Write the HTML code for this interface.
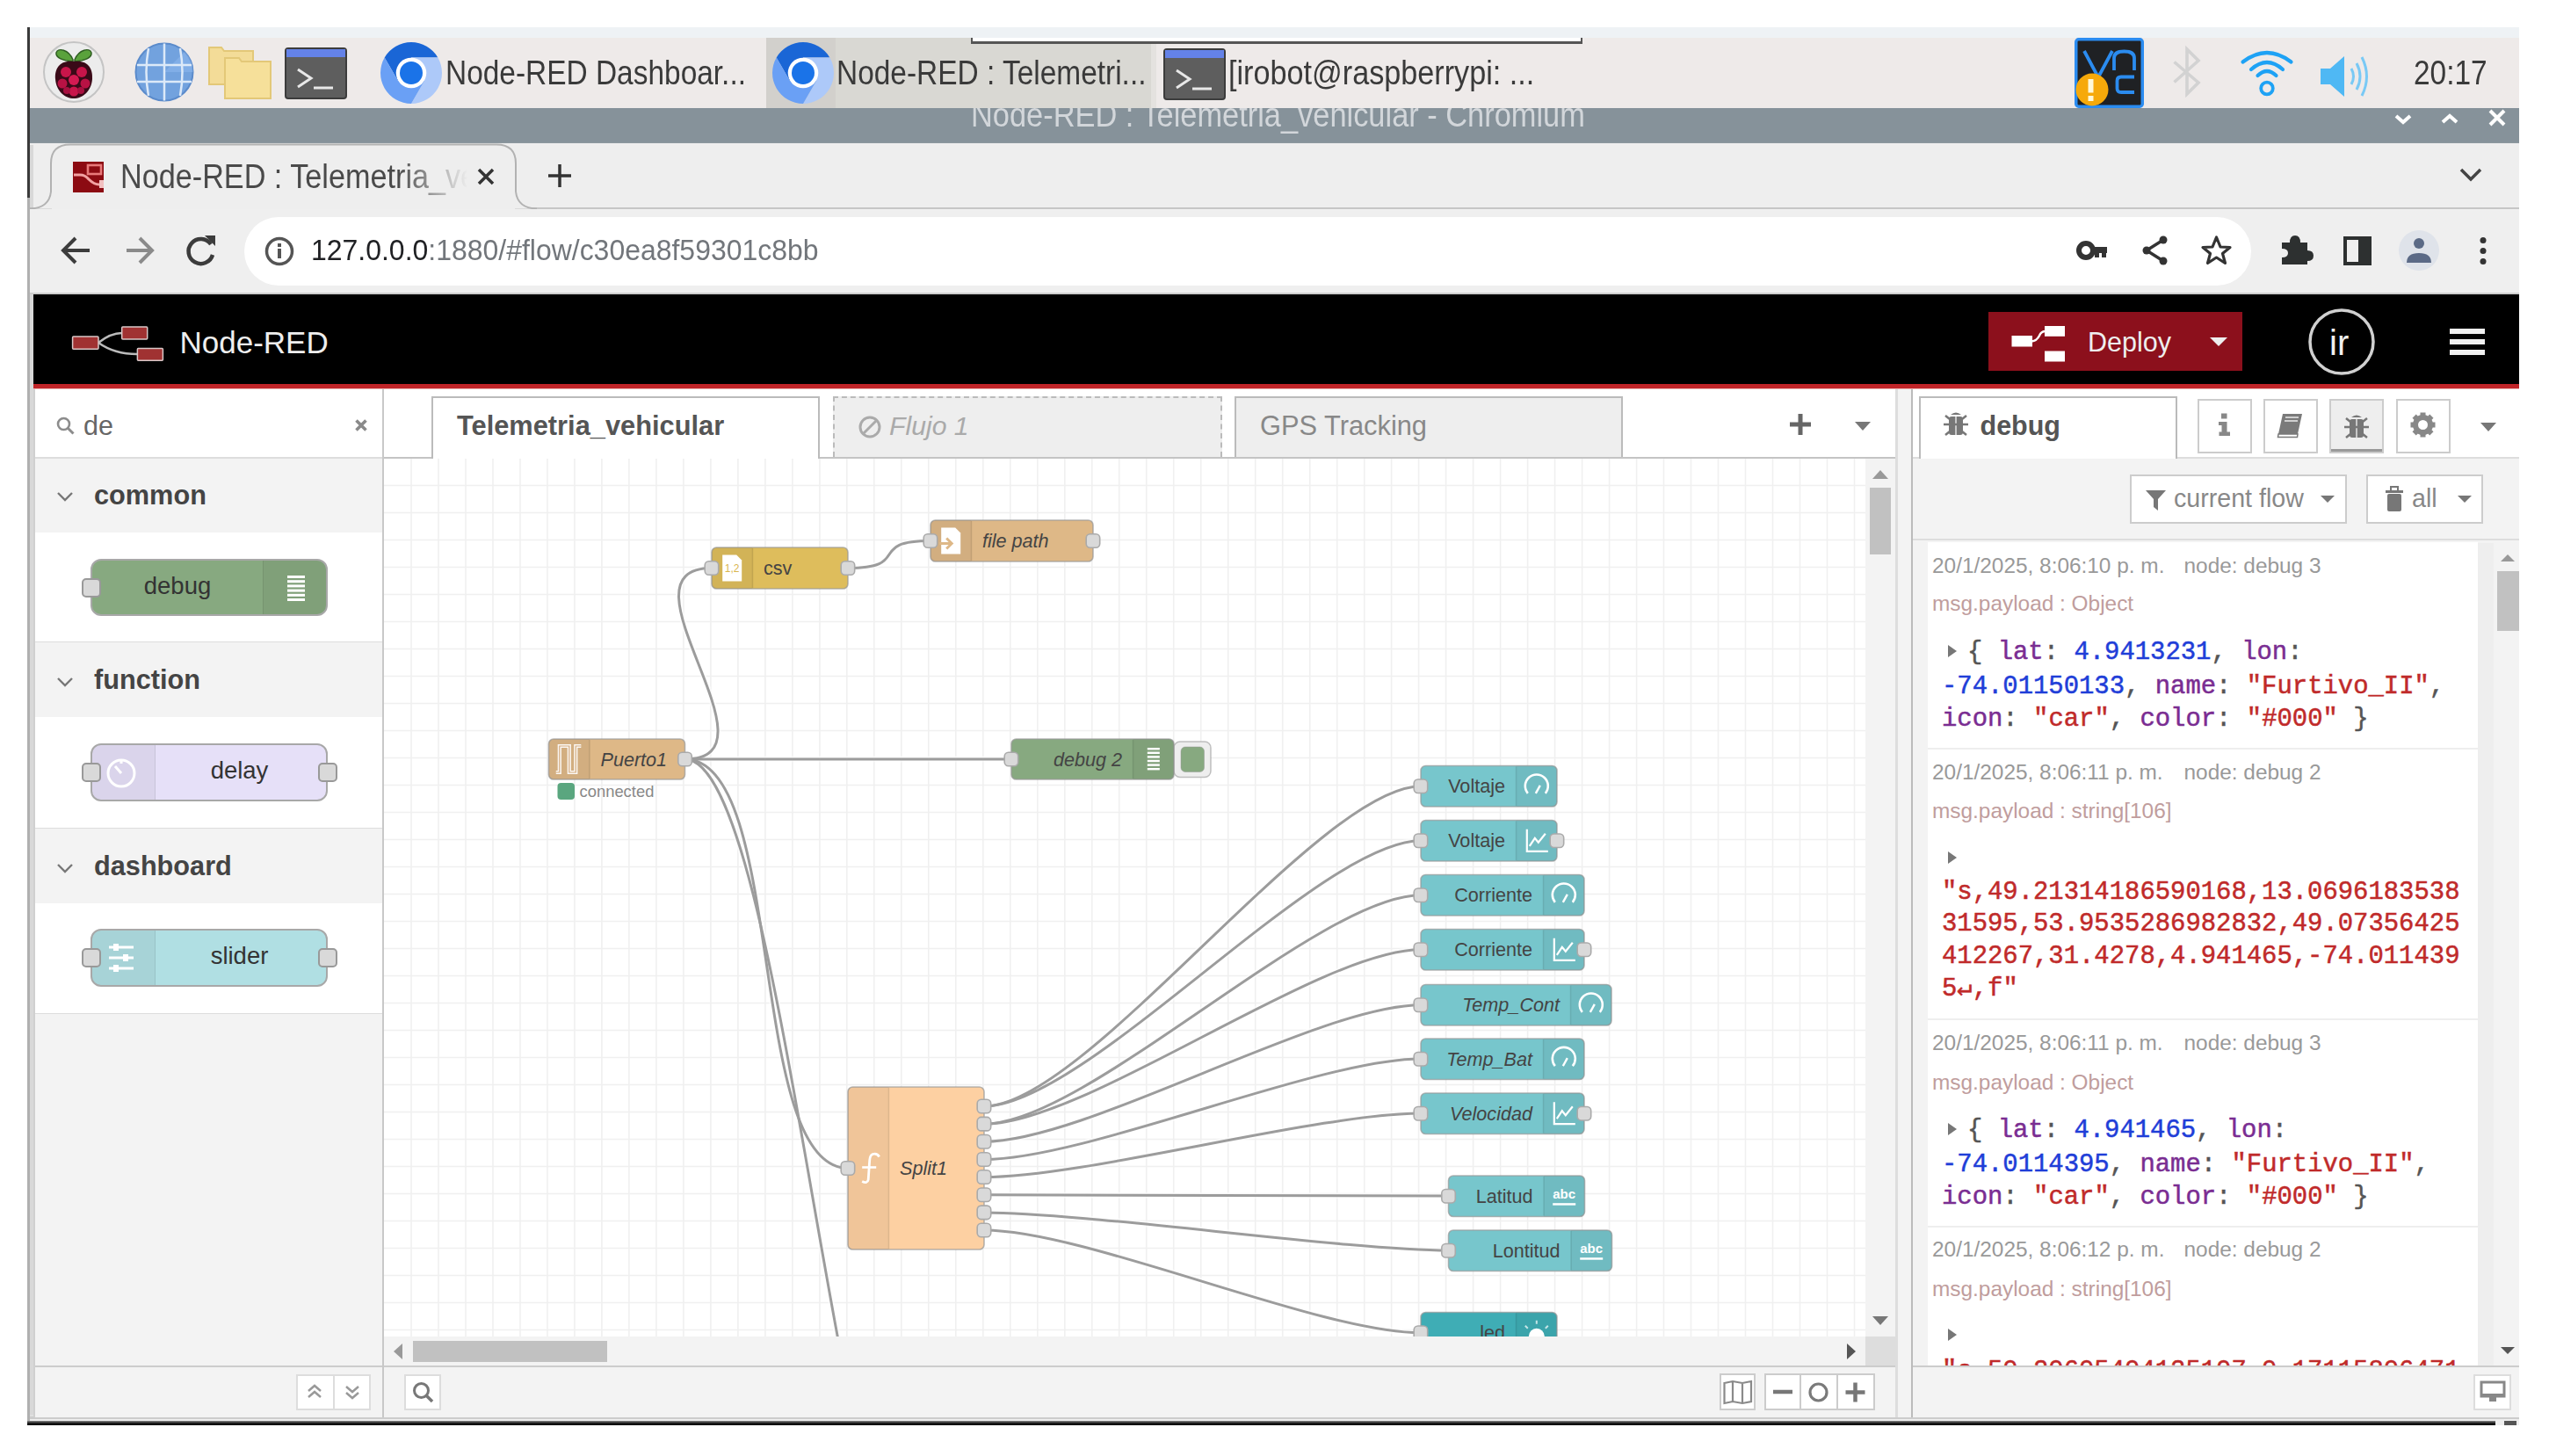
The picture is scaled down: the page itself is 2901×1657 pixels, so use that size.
<!DOCTYPE html>
<html><head><meta charset="utf-8">
<style>
html,body{margin:0;padding:0;}
body{width:2901px;height:1657px;overflow:hidden;background:#fff;position:relative;font-family:"Liberation Sans",sans-serif;}
.a{position:absolute;box-sizing:border-box;}
.t{position:absolute;white-space:nowrap;line-height:1;}
svg{position:absolute;overflow:visible;}
</style></head><body>
<div class="a" style="left:31px;top:31px;width:3px;height:194px;background:#3a3a3a;"></div>
<div class="a" style="left:31px;top:225px;width:3px;height:1397px;background:#b0b0b0;"></div>
<div class="a" style="left:34px;top:31px;width:2833px;height:12px;background:#eef2f5;"></div>
<div class="a" style="left:34px;top:43px;width:2833px;height:80px;background:#eeeae9;"></div>
<div class="a" style="left:34px;top:123px;width:2833px;height:40px;background:#86929a;"></div>
<div class="a" style="left:34px;top:162px;width:2833px;height:1px;background:#8d989f;"></div>
<div class="a" style="left:34px;top:163px;width:2833px;height:1459px;background:#eeeeee;"></div>
<div class="a" style="left:34px;top:165px;width:4px;height:1450px;background:#d8d8d8;"></div>
<div class="a" style="left:34px;top:1610px;width:2833px;height:2px;background:#e0e0e0;"></div>
<div class="a" style="left:34px;top:1612px;width:2833px;height:3px;background:#cccccc;"></div>
<div class="a" style="left:34px;top:1615px;width:2833px;height:2px;background:#eeeeee;"></div>
<div class="a" style="left:31px;top:1617px;width:2809px;height:5px;background:linear-gradient(#888,#111 60%,#000)"></div>
<div class="a" style="left:2850px;top:1617px;width:14px;height:5px;background:#555;"></div>
<div class="a" style="left:872px;top:43px;width:438px;height:80px;background:#d9d8d3;"></div>
<div class="a" style="left:872px;top:43px;width:79px;height:80px;background:#d2d0cc;"></div>
<div class="a" style="left:1310px;top:43px;width:6px;height:80px;background:#e4e2df;"></div>
<div class="a" style="left:1105px;top:43px;width:696px;height:7px;background:#fff;border-left:2px solid #555;border-right:2px solid #555;border-bottom:3px solid #555"></div>
<svg style="left:44px;top:42px" width="80" height="80" viewBox="0 0 80 80">
<circle cx="40" cy="40" r="34" fill="#ececec" stroke="#c4c4c4" stroke-width="2"/>
<path d="M39 26 C 34 14, 22 12, 20 18 C 19 24, 28 27, 39 28 Z" fill="#5aa23c" stroke="#2f5e22" stroke-width="1.5"/>
<path d="M41 26 C 46 14, 58 12, 60 18 C 61 24, 52 27, 41 28 Z" fill="#5aa23c" stroke="#2f5e22" stroke-width="1.5"/>
<path d="M40 28 C 56 26, 62 36, 61 48 C 60 62, 50 70, 40 70 C 30 70, 20 62, 19 48 C 18 36, 24 26, 40 28 Z" fill="#3a0a18"/>
<circle cx="31" cy="40" r="6" fill="#c8154a"/><circle cx="49" cy="40" r="6" fill="#c8154a"/>
<circle cx="40" cy="49" r="6" fill="#d41a52"/><circle cx="27" cy="53" r="5.5" fill="#b81244"/><circle cx="53" cy="53" r="5.5" fill="#b81244"/>
<circle cx="40" cy="62" r="5.5" fill="#c8154a"/><circle cx="32" cy="61" r="4" fill="#a81040"/><circle cx="48" cy="61" r="4" fill="#a81040"/>
</svg>
<svg style="left:152px;top:47px" width="70" height="70" viewBox="0 0 70 70">
<circle cx="35" cy="35" r="32.5" fill="#72a2de" stroke="#5b8bcb" stroke-width="2"/>
<path d="M35 35 L58 12 A32.5 32.5 0 0 1 67.5 35 Z" fill="#8cb6ec" opacity="0.6"/>
<line x1="35" y1="2.5" x2="35" y2="67.5" stroke="#dce9f8" stroke-width="2.5"/>
<line x1="4" y1="27" x2="66" y2="27" stroke="#dce9f8" stroke-width="2.5"/>
<line x1="4" y1="46" x2="66" y2="46" stroke="#dce9f8" stroke-width="2.5"/>
<path d="M17 8 Q12 35 17 62 M53 8 Q58 35 53 62" fill="none" stroke="#dce9f8" stroke-width="2.5"/>
</svg>
<svg style="left:236px;top:52px" width="76" height="64" viewBox="0 0 76 64">
<path d="M2 2 H16 L19 6 H52 V44 H2 Z" fill="#f3dc98" stroke="#e3c878" stroke-width="2"/>
<path d="M20 14 H36 L39 18 H72 V60 H20 Z" fill="#f6e09a" stroke="#e3c878" stroke-width="2"/>
</svg>
<svg style="left:324px;top:54px" width="71" height="59" viewBox="0 0 71 59">
<rect x="1" y="1" width="69" height="57" rx="3" fill="#5e5e5e" stroke="#3c3c3c" stroke-width="2"/>
<rect x="2" y="2" width="67" height="9" fill="#6482e8"/>
<polyline points="15,25 30,35 15,45" fill="none" stroke="#e8e8e8" stroke-width="3"/>
<line x1="33" y1="46" x2="55" y2="46" stroke="#e8e8e8" stroke-width="3"/>
</svg>
<svg style="left:1324px;top:55px" width="71" height="59" viewBox="0 0 71 59">
<rect x="1" y="1" width="69" height="57" rx="3" fill="#5e5e5e" stroke="#3c3c3c" stroke-width="2"/>
<rect x="2" y="2" width="67" height="9" fill="#6482e8"/>
<polyline points="15,25 30,35 15,45" fill="none" stroke="#e8e8e8" stroke-width="3"/>
<line x1="33" y1="46" x2="55" y2="46" stroke="#e8e8e8" stroke-width="3"/>
</svg>
<svg style="left:432.7px;top:47.8px" width="70" height="70" viewBox="-35 -35 70 70">
<path d="M-30.31 -17.5 A35 35 0 0 1 30.31 -17.5 L0 -17.5 L-15.16 8.75 Z" fill="#1a66d6"/>
<path d="M30.31 -17.5 A35 35 0 0 1 0 35 L15.16 8.75 L0 -17.5 Z" fill="#adc9f9"/>
<path d="M0 35 A35 35 0 0 1 -30.31 -17.5 L-15.16 8.75 L15.16 8.75 Z" fill="#6aa0f5"/>
<circle cx="0" cy="0" r="17.3" fill="#ffffff"/>
<circle cx="0" cy="0" r="13" fill="#1a73e8"/>
</svg>
<svg style="left:878.5px;top:47.8px" width="70" height="70" viewBox="-35 -35 70 70">
<path d="M-30.31 -17.5 A35 35 0 0 1 30.31 -17.5 L0 -17.5 L-15.16 8.75 Z" fill="#1a66d6"/>
<path d="M30.31 -17.5 A35 35 0 0 1 0 35 L15.16 8.75 L0 -17.5 Z" fill="#adc9f9"/>
<path d="M0 35 A35 35 0 0 1 -30.31 -17.5 L-15.16 8.75 L15.16 8.75 Z" fill="#6aa0f5"/>
<circle cx="0" cy="0" r="17.3" fill="#ffffff"/>
<circle cx="0" cy="0" r="13" fill="#1a73e8"/>
</svg>
<div class="t" style="left:507.0px;top:63.8px;font-size:38px;color:#3a3a3a;font-weight:normal;font-style:normal;font-family:'Liberation Sans',sans-serif;transform:scaleX(0.88);transform-origin:0 0;">Node-RED Dashboar...</div>
<div class="t" style="left:952.0px;top:63.8px;font-size:38px;color:#3a3a3a;font-weight:normal;font-style:normal;font-family:'Liberation Sans',sans-serif;transform:scaleX(0.88);transform-origin:0 0;">Node-RED : Telemetri...</div>
<div class="t" style="left:1398.0px;top:63.8px;font-size:38px;color:#3a3a3a;font-weight:normal;font-style:normal;font-family:'Liberation Sans',sans-serif;transform:scaleX(0.9);transform-origin:0 0;">[irobot@raspberrypi: ...</div>
<div class="t" style="left:2747.0px;top:63.8px;font-size:38px;color:#3a3a3a;font-weight:normal;font-style:normal;font-family:'Liberation Sans',sans-serif;transform:scaleX(0.88);transform-origin:0 0;">20:17</div>
<svg style="left:2361px;top:43px" width="80" height="80" viewBox="2361 43 80 80">
<rect x="2362.75" y="44.75" width="75.5" height="76.5" rx="3" fill="#1f2124" stroke="#2b8cf0" stroke-width="3.5"/>
<path d="M2372 58 L2388 88 L2404 58" fill="none" stroke="#2b8cf0" stroke-width="3.8"/>
<path d="M2406 80 V66 Q2406 58.5 2417.5 58.5 Q2429 58.5 2429 66 V80" fill="none" stroke="#2b8cf0" stroke-width="3.8"/>
<path d="M2429 87.5 H2414 Q2409.5 87.5 2409.5 92 V100.5 Q2409.5 105 2414 105 H2429" fill="none" stroke="#2b8cf0" stroke-width="3.8"/>
<circle cx="2381" cy="102" r="18.5" fill="#f6a90a"/>
<rect x="2376.5" y="90" width="6" height="15.5" fill="#fff8d8"/><rect x="2376.5" y="109" width="6" height="6" fill="#fff8d8"/>
</svg>
<svg style="left:2470px;top:52px" width="38" height="62" viewBox="0 0 38 62">
<path d="M4.5 18.5 L32 42 L19 55 V4 L32 17 L4.5 41.5" fill="none" stroke="#d2d2d2" stroke-width="3.6"/>
</svg>
<svg style="left:2549px;top:56px" width="62" height="58" viewBox="0 0 62 58">
<path d="M3.5 14.5 Q31 -6.5 58.5 14.5" fill="none" stroke="#1ea2f5" stroke-width="4.2" stroke-linecap="round"/>
<path d="M13 23 Q31 7 49 23" fill="none" stroke="#1ea2f5" stroke-width="4.2" stroke-linecap="round"/>
<path d="M20.5 30 Q31 20 41.5 30" fill="none" stroke="#1ea2f5" stroke-width="4.2" stroke-linecap="round"/>
<circle cx="31" cy="44.5" r="6.8" fill="none" stroke="#1ea2f5" stroke-width="3.8"/>
</svg>
<svg style="left:2638px;top:58px" width="64" height="58" viewBox="0 0 64 58">
<path d="M3 20 H14 L30 6 V52 L14 38 H3 Z" fill="#4fb8f4"/>
<path d="M38 20 Q43 29 38 38" fill="none" stroke="#79c9f5" stroke-width="3"/>
<path d="M44 14 Q52 29 44 44" fill="none" stroke="#79c9f5" stroke-width="3"/>
<path d="M50 7 Q61 29 50 51" fill="none" stroke="#79c9f5" stroke-width="3"/>
</svg>
<div class="a" style="left:34px;top:123px;width:2833px;height:40px;overflow:hidden"><div class="t" style="left:1071.0px;top:-10.6px;font-size:38px;color:#d2d6da;font-weight:normal;font-style:normal;font-family:'Liberation Sans',sans-serif;transform:scaleX(0.905);transform-origin:0 0;">Node-RED : Telemetria_vehicular - Chromium</div></div>
<svg style="left:2722px;top:124px" width="140" height="24" viewBox="0 0 140 24">
<polyline points="5,8 13,15 21,8" fill="none" stroke="#fff" stroke-width="4"/>
<polyline points="58,15 66,8 74,15" fill="none" stroke="#fff" stroke-width="4"/>
<path d="M112 2 L128 18 M128 2 L112 18" stroke="#fff" stroke-width="4"/>
</svg>
<div class="a" style="left:34px;top:236px;width:2833px;height:2px;background:#c6c6c6;"></div>
<svg style="left:34px;top:162px" width="600" height="78" viewBox="34 162 600 78">
<path d="M34 237.5 Q56 237 58 218 V186 Q58 164.5 80 164.5 H565 Q587 164.5 587 186 V218 Q589 237 611 237.5" fill="#eeeeee" stroke="#b2b2b2" stroke-width="2"/>
<rect x="59" y="230" width="527" height="10" fill="#eeeeee"/>
</svg>
<svg style="left:83px;top:184px" width="35" height="35" viewBox="0 0 35 35">
<rect x="0" y="0" width="35" height="35" fill="#8c0b12"/>
<rect x="17" y="4" width="15" height="10" fill="none" stroke="#e87a7a" stroke-width="2.6"/>
<path d="M1 15 H8 Q14 15 18 20 Q24 26 30 26" fill="none" stroke="#f2a2a2" stroke-width="3"/>
<rect x="30" y="21" width="5" height="9" fill="#f2c0c0"/>
</svg>
<div class="a" style="left:137px;top:170px;width:395px;height:60px;overflow:hidden;-webkit-mask-image:linear-gradient(to right,#000 80%,transparent 100%);mask-image:linear-gradient(to right,#000 80%,transparent 100%)"><div class="t" style="left:0.0px;top:11.8px;font-size:38px;color:#4a4a4a;font-weight:normal;font-style:normal;font-family:'Liberation Sans',sans-serif;transform:scaleX(0.9);transform-origin:0 0;">Node-RED : Telemetria_vehicular</div></div>
<svg style="left:540px;top:188px" width="26" height="26" viewBox="0 0 26 26">
<path d="M5 5 L21 21 M21 5 L5 21" stroke="#333" stroke-width="3.5"/></svg>
<svg style="left:621px;top:184px" width="32" height="32" viewBox="0 0 32 32">
<path d="M16 3 V29 M3 16 H29" stroke="#333" stroke-width="3.5"/></svg>
<svg style="left:2798px;top:190px" width="28" height="18" viewBox="0 0 28 18">
<polyline points="3,3 14,14 25,3" fill="none" stroke="#444" stroke-width="3.5"/></svg>
<div class="a" style="left:34px;top:238px;width:2833px;height:96px;background:#efefef;"></div>
<div class="a" style="left:34px;top:333px;width:2833px;height:2px;background:#cfcfcf;"></div>
<div class="a" style="left:278px;top:247px;width:2284px;height:78px;background:#fff;border-radius:39px"></div>
<svg style="left:64px;top:264px" width="190" height="42" viewBox="0 0 190 42">
<path d="M38 21 H9 M22 7 L8 21 L22 35" fill="none" stroke="#3c3c3c" stroke-width="4"/>
<path d="M80 21 H108 M95 7 L109 21 L95 35" fill="none" stroke="#8a8a8a" stroke-width="4"/>
<path d="M176 14 A14 14 0 1 0 178 26" fill="none" stroke="#3c3c3c" stroke-width="4.5"/>
<path d="M169 4 L181 4 L181 16 Z" fill="#3c3c3c"/>
</svg>
<svg style="left:300px;top:268px" width="36" height="36" viewBox="0 0 36 36">
<circle cx="18" cy="18" r="14.5" fill="none" stroke="#555" stroke-width="3.5"/>
<rect x="16" y="15" width="4" height="11" fill="#555"/><rect x="16" y="9" width="4" height="4" fill="#555"/>
</svg>
<div class="t" style="left:354.0px;top:267.2px;font-size:34px;color:#72767b;font-weight:normal;font-style:normal;font-family:'Liberation Sans',sans-serif;transform:scaleX(0.94);transform-origin:0 0;"><span style="color:#202124">127.0.0.0</span><span style="color:#72767b">:1880/#flow/c30ea8f59301c8bb</span></div>
<svg style="left:2355px;top:262px" width="500" height="48" viewBox="2355 262 500 48">
<circle cx="2374" cy="285" r="8" fill="none" stroke="#333" stroke-width="6"/>
<rect x="2380" y="281" width="18" height="7" fill="#333"/><rect x="2384" y="286" width="5" height="7" fill="#333"/><rect x="2392" y="286" width="5" height="7" fill="#333"/>
<path d="M2462 273 L2443 285 L2462 297" fill="none" stroke="#333" stroke-width="3.5"/>
<circle cx="2462" cy="273" r="4.5" fill="#333"/><circle cx="2443" cy="285" r="4.5" fill="#333"/><circle cx="2462" cy="297" r="4.5" fill="#333"/>
<path d="M2522.5 270 L2527 281 L2538 281.5 L2529.5 288.5 L2532.5 299.5 L2522.5 293 L2512.5 299.5 L2515.5 288.5 L2507 281.5 L2518 281 Z" fill="none" stroke="#333" stroke-width="3.2" stroke-linejoin="round"/>
<path d="M2597 276 H2606 Q2606 268 2612 268 Q2618 268 2618 276 H2626 V285 Q2633 285 2633 291 Q2633 297 2626 297 V301 H2597 V293 Q2604 293 2604 288 Q2604 283 2597 283 Z" fill="#2d3030"/>
<rect x="2669" y="271" width="28" height="29" fill="none" stroke="#2d3030" stroke-width="4"/><rect x="2684" y="271" width="13" height="29" fill="#2d3030"/>
<circle cx="2753" cy="285" r="23" fill="#dfe3ea"/>
<circle cx="2753" cy="277" r="6" fill="#5b6a86"/><path d="M2739 299 Q2739 288 2753 288 Q2767 288 2767 299 Z" fill="#5b6a86"/>
<circle cx="2826" cy="273.5" r="3.5" fill="#333"/><circle cx="2826" cy="285.5" r="3.5" fill="#333"/><circle cx="2826" cy="297.5" r="3.5" fill="#333"/>
</svg>
<div class="a" style="left:38px;top:335px;width:2829px;height:102px;background:#000;"></div>
<div class="a" style="left:38px;top:437px;width:2829px;height:5px;background:#c02428;"></div>
<div class="a" style="left:38px;top:442px;width:2829px;height:1px;background:#e8b4b4;"></div>
<svg style="left:78px;top:366px" width="112" height="50" viewBox="78 366 112 50">
<path d="M112 390 Q126 379 138.7 379 M112 390 Q130 403 156.4 403" fill="none" stroke="#bbb" stroke-width="2.5"/>
<rect x="82.6" y="383" width="29.4" height="14.3" rx="1" fill="#a03232" stroke="#d8c8c8" stroke-width="1.5"/>
<rect x="138.7" y="372" width="29" height="14" rx="1" fill="#a03232" stroke="#d8c8c8" stroke-width="1.5"/>
<rect x="156.4" y="396.5" width="29" height="13.8" rx="1" fill="#a03232" stroke="#d8c8c8" stroke-width="1.5"/>
</svg>
<div class="t" style="left:204.5px;top:371.9px;font-size:35px;color:#eeeeee;font-weight:normal;font-style:normal;font-family:'Liberation Sans',sans-serif;">Node-RED</div>
<div class="a" style="left:2263px;top:355px;width:289px;height:67px;background:#8c101c;"></div>
<svg style="left:2285px;top:368px" width="70" height="46" viewBox="2285 368 70 46">
<rect x="2289.5" y="382" width="23.5" height="12.5" fill="#fff"/>
<path d="M2312 388.5 Q2318 388 2321 382 Q2323 377 2328 377" fill="none" stroke="#fff" stroke-width="2.5"/>
<rect x="2327" y="371" width="23" height="11.8" fill="#fff"/>
<rect x="2327" y="399.5" width="23" height="12" fill="#fff"/>
</svg>
<div class="t" style="left:2376.0px;top:374.2px;font-size:30.5px;color:#eeeeee;font-weight:normal;font-style:normal;font-family:'Liberation Sans',sans-serif;">Deploy</div>
<svg style="left:2514px;top:383px" width="22" height="12" viewBox="0 0 22 12"><path d="M1 1 H21 L11 11 Z" fill="#eee"/></svg>
<svg style="left:2626px;top:350px" width="78" height="78" viewBox="0 0 78 78">
<circle cx="39" cy="39" r="36" fill="none" stroke="#d0d0d0" stroke-width="3.5"/></svg>
<div class="t" style="left:2651.0px;top:370.1px;font-size:40px;color:#f0f0f0;font-weight:normal;font-style:normal;font-family:'Liberation Sans',sans-serif;">ir</div>
<div class="a" style="left:2788px;top:374px;width:40px;height:6px;background:#f0f0f0;"></div>
<div class="a" style="left:2788px;top:386px;width:40px;height:6px;background:#f0f0f0;"></div>
<div class="a" style="left:2788px;top:398px;width:40px;height:6px;background:#f0f0f0;"></div>
<div class="a" style="left:38px;top:443px;width:399px;height:1170px;background:#f3f3f3;"></div>
<div class="a" style="left:38px;top:443px;width:2px;height:1170px;background:#d0d0d0;"></div>
<div class="a" style="left:435px;top:443px;width:2px;height:1170px;background:#c8c8c8;"></div>
<div class="a" style="left:40px;top:443px;width:395px;height:77px;background:#ffffff;"></div>
<div class="a" style="left:40px;top:520px;width:395px;height:2px;background:#dddddd;"></div>
<svg style="left:63px;top:473px" width="24" height="24" viewBox="0 0 24 24">
<circle cx="9.5" cy="9.5" r="6.5" fill="none" stroke="#8c8c8c" stroke-width="2.6"/><path d="M14 14 L20.5 20.5" stroke="#8c8c8c" stroke-width="3"/></svg>
<div class="t" style="left:95.0px;top:469.2px;font-size:30.5px;color:#666;font-weight:normal;font-style:normal;font-family:'Liberation Sans',sans-serif;">de</div>
<svg style="left:402px;top:475px" width="18" height="18" viewBox="0 0 18 18">
<path d="M3.5 3.5 L14.5 14.5 M14.5 3.5 L3.5 14.5" stroke="#8a8a8a" stroke-width="3.6"/></svg>
<div class="a" style="left:40px;top:522px;width:395px;height:84px;background:#f3f3f3;"></div>
<svg style="left:64px;top:559px" width="20" height="12" viewBox="0 0 20 12"><polyline points="2,2 10,10 18,2" fill="none" stroke="#777" stroke-width="2.4"/></svg>
<div class="t" style="left:107.0px;top:549.0px;font-size:30.7px;color:#444;font-weight:bold;font-style:normal;font-family:'Liberation Sans',sans-serif;">common</div>
<div class="a" style="left:40px;top:606px;width:395px;height:124px;background:#ffffff;"></div>
<div class="a" style="left:40px;top:730px;width:395px;height:1px;background:#dddddd;"></div>
<div class="a" style="left:103px;top:636px;width:270px;height:65px;background:#87a980;border:2px solid #a8a8a8;border-radius:12px;overflow:hidden">
<div class="a" style="right:0;top:0;width:72px;height:100%;background:rgba(0,0,0,0.05);border-left:1px solid rgba(0,0,0,0.08)"></div>
</div>
<svg style="left:320px;top:652px" width="34" height="34" viewBox="0 0 34 34"><rect x="7" y="3.0" width="20" height="3" fill="#fff"/><rect x="7" y="8.2" width="20" height="3" fill="#fff"/><rect x="7" y="13.4" width="20" height="3" fill="#fff"/><rect x="7" y="18.6" width="20" height="3" fill="#fff"/><rect x="7" y="23.8" width="20" height="3" fill="#fff"/><rect x="7" y="29.0" width="20" height="3" fill="#fff"/></svg>
<div class="t" style="left:202px;top:652.8px;font-size:27.5px;color:#333;transform:translateX(-50%)">debug</div>
<div class="a" style="left:93px;top:657.5px;width:22px;height:22px;background:#d9d9d9;border:2px solid #999;border-radius:5px"></div>
<div class="a" style="left:40px;top:731px;width:395px;height:85px;background:#f3f3f3;"></div>
<svg style="left:64px;top:770px" width="20" height="12" viewBox="0 0 20 12"><polyline points="2,2 10,10 18,2" fill="none" stroke="#777" stroke-width="2.4"/></svg>
<div class="t" style="left:107.0px;top:759.0px;font-size:30.7px;color:#444;font-weight:bold;font-style:normal;font-family:'Liberation Sans',sans-serif;">function</div>
<div class="a" style="left:40px;top:816px;width:395px;height:126px;background:#ffffff;"></div>
<div class="a" style="left:40px;top:942px;width:395px;height:1px;background:#dddddd;"></div>
<div class="a" style="left:103px;top:846px;width:270px;height:66px;background:#e6e0f8;border:2px solid #a8a8a8;border-radius:12px;overflow:hidden">
<div class="a" style="left:0;top:0;width:72px;height:100%;background:rgba(0,0,0,0.05);border-right:1px solid rgba(0,0,0,0.08)"></div>
</div>
<svg style="left:118px;top:859px" width="40" height="40" viewBox="0 0 40 40"><circle cx="20" cy="21" r="15" fill="none" stroke="#fff" stroke-width="3"/><path d="M20 6 V10 M20 21 L13 13" stroke="#fff" stroke-width="3"/></svg>
<div class="t" style="left:272.5px;top:863.2px;font-size:27.5px;color:#333;transform:translateX(-50%)">delay</div>
<div class="a" style="left:93px;top:868.0px;width:22px;height:22px;background:#d9d9d9;border:2px solid #999;border-radius:5px"></div>
<div class="a" style="left:362px;top:868.0px;width:22px;height:22px;background:#d9d9d9;border:2px solid #999;border-radius:5px"></div>
<div class="a" style="left:40px;top:943px;width:395px;height:85px;background:#f3f3f3;"></div>
<svg style="left:64px;top:982px" width="20" height="12" viewBox="0 0 20 12"><polyline points="2,2 10,10 18,2" fill="none" stroke="#777" stroke-width="2.4"/></svg>
<div class="t" style="left:107.0px;top:971.0px;font-size:30.7px;color:#444;font-weight:bold;font-style:normal;font-family:'Liberation Sans',sans-serif;">dashboard</div>
<div class="a" style="left:40px;top:1028px;width:395px;height:125px;background:#ffffff;"></div>
<div class="a" style="left:40px;top:1153px;width:395px;height:1px;background:#dddddd;"></div>
<div class="a" style="left:103px;top:1057px;width:270px;height:66px;background:#b0dfe3;border:2px solid #a8a8a8;border-radius:12px;overflow:hidden">
<div class="a" style="left:0;top:0;width:72px;height:100%;background:rgba(0,0,0,0.05);border-right:1px solid rgba(0,0,0,0.08)"></div>
</div>
<svg style="left:120px;top:1070px" width="36" height="40" viewBox="0 0 36 40"><path d="M4 8 H32 M4 20 H32 M4 32 H32" stroke="#fff" stroke-width="3"/><rect x="9" y="4" width="6" height="8" fill="#fff"/><rect x="20" y="16" width="6" height="8" fill="#fff"/><rect x="9" y="28" width="6" height="8" fill="#fff"/></svg>
<div class="t" style="left:272.5px;top:1074.2px;font-size:27.5px;color:#333;transform:translateX(-50%)">slider</div>
<div class="a" style="left:93px;top:1079.0px;width:22px;height:22px;background:#d9d9d9;border:2px solid #999;border-radius:5px"></div>
<div class="a" style="left:362px;top:1079.0px;width:22px;height:22px;background:#d9d9d9;border:2px solid #999;border-radius:5px"></div>
<div class="a" style="left:40px;top:1554px;width:395px;height:2px;background:#cccccc;"></div>
<div class="a" style="left:337px;top:1564px;width:85px;height:41px;background:#fff;border:2px solid #ddd"></div>
<div class="a" style="left:379px;top:1564px;width:2px;height:41px;background:#ddd"></div>
<svg style="left:337px;top:1564px" width="85" height="41" viewBox="0 0 85 41">
<polyline points="14,19 21,13 28,19" fill="none" stroke="#999" stroke-width="2.5"/><polyline points="14,26 21,20 28,26" fill="none" stroke="#999" stroke-width="2.5"/>
<polyline points="57,14 64,20 71,14" fill="none" stroke="#999" stroke-width="2.5"/><polyline points="57,21 64,27 71,21" fill="none" stroke="#999" stroke-width="2.5"/>
</svg>
<div class="a" style="left:437px;top:443px;width:1720px;height:79px;background:#ffffff;"></div>
<div class="a" style="left:437px;top:520px;width:1720px;height:2px;background:#c4c4c4;"></div>
<div class="a" style="left:491px;top:451px;width:442px;height:71px;background:#fff;border:2px solid #bbb;border-bottom:none"></div>
<div class="t" style="left:520.0px;top:469.9px;font-size:30.8px;color:#555;font-weight:bold;font-style:normal;font-family:'Liberation Sans',sans-serif;">Telemetria_vehicular</div>
<div class="a" style="left:948px;top:451px;width:443px;height:69px;background:#eeeeee;border:2px dashed #bbb;border-bottom:none"></div>
<svg style="left:976px;top:472px" width="28" height="28" viewBox="0 0 28 28"><circle cx="14" cy="14" r="11" fill="none" stroke="#aaa" stroke-width="3"/><path d="M7 21 L21 7" stroke="#aaa" stroke-width="3"/></svg>
<div class="t" style="left:1012.0px;top:470.4px;font-size:30.2px;color:#aaa;font-weight:normal;font-style:italic;font-family:'Liberation Sans',sans-serif;">Flujo 1</div>
<div class="a" style="left:1405px;top:451px;width:442px;height:69px;background:#eeeeee;border:2px solid #bbb;border-bottom:none"></div>
<div class="t" style="left:1434.0px;top:469.9px;font-size:30.8px;color:#888;font-weight:normal;font-style:normal;font-family:'Liberation Sans',sans-serif;">GPS Tracking</div>
<svg style="left:2036px;top:470px" width="26" height="26" viewBox="0 0 26 26"><path d="M13 1 V25 M1 13 H25" stroke="#666" stroke-width="5"/></svg>
<svg style="left:2110px;top:479px" width="20" height="12" viewBox="0 0 20 12"><path d="M1 1 H19 L10 11 Z" fill="#777"/></svg>
<svg style="left:437px;top:522px;overflow:hidden" width="1686" height="999" viewBox="437 522 1686 999">
<rect x="437" y="522" width="1686" height="999" fill="#fff"/>
<path d="M468.0 522V1521 M499.0 522V1521 M530.0 522V1521 M561.0 522V1521 M592.0 522V1521 M623.0 522V1521 M653.9 522V1521 M684.9 522V1521 M715.9 522V1521 M746.9 522V1521 M777.9 522V1521 M808.9 522V1521 M839.9 522V1521 M870.9 522V1521 M901.9 522V1521 M932.9 522V1521 M963.8 522V1521 M994.8 522V1521 M1025.8 522V1521 M1056.8 522V1521 M1087.8 522V1521 M1118.8 522V1521 M1149.8 522V1521 M1180.8 522V1521 M1211.8 522V1521 M1242.8 522V1521 M1273.7 522V1521 M1304.7 522V1521 M1335.7 522V1521 M1366.7 522V1521 M1397.7 522V1521 M1428.7 522V1521 M1459.7 522V1521 M1490.7 522V1521 M1521.7 522V1521 M1552.7 522V1521 M1583.6 522V1521 M1614.6 522V1521 M1645.6 522V1521 M1676.6 522V1521 M1707.6 522V1521 M1738.6 522V1521 M1769.6 522V1521 M1800.6 522V1521 M1831.6 522V1521 M1862.6 522V1521 M1893.5 522V1521 M1924.5 522V1521 M1955.5 522V1521 M1986.5 522V1521 M2017.5 522V1521 M2048.5 522V1521 M2079.5 522V1521 M2110.5 522V1521 M437 552.5H2123 M437 583.5H2123 M437 614.5H2123 M437 645.5H2123 M437 676.5H2123 M437 707.5H2123 M437 738.5H2123 M437 769.5H2123 M437 800.5H2123 M437 831.5H2123 M437 862.5H2123 M437 893.5H2123 M437 924.5H2123 M437 955.5H2123 M437 986.5H2123 M437 1017.5H2123 M437 1048.5H2123 M437 1079.5H2123 M437 1110.5H2123 M437 1141.5H2123 M437 1172.5H2123 M437 1203.5H2123 M437 1234.5H2123 M437 1265.5H2123 M437 1296.5H2123 M437 1327.5H2123 M437 1358.5H2123 M437 1389.5H2123 M437 1420.5H2123 M437 1451.5H2123 M437 1482.5H2123 M437 1513.5H2123" stroke="#f0f0f0" stroke-width="1.6" fill="none"/>
<path d="M779.5 864.0 C895.8 864.0 693.8 646.5 810.0 646.5" stroke="#fff" stroke-opacity="0.5" stroke-width="7" fill="none"/>
<path d="M965.0 646.5 C1039.2 646.5 984.8 615.5 1059.0 615.5" stroke="#fff" stroke-opacity="0.5" stroke-width="7" fill="none"/>
<path d="M779.5 864.0 C895.8 864.0 1034.8 864.0 1151.0 864.0" stroke="#fff" stroke-opacity="0.5" stroke-width="7" fill="none"/>
<path d="M779.5 864.0 C895.8 864.0 848.8 1329.5 965.0 1329.5" stroke="#fff" stroke-opacity="0.5" stroke-width="7" fill="none"/>
<path d="M779.5 864.0 C895.8 864.0 953.8 1860.0 1070.0 1860.0" stroke="#fff" stroke-opacity="0.5" stroke-width="7" fill="none"/>
<path d="M1120.0 1259.0 C1236.2 1259.0 1500.8 894.8 1617.0 894.8" stroke="#fff" stroke-opacity="0.5" stroke-width="7" fill="none"/>
<path d="M1120.0 1259.0 C1236.2 1259.0 1500.8 956.8 1617.0 956.8" stroke="#fff" stroke-opacity="0.5" stroke-width="7" fill="none"/>
<path d="M1120.0 1279.2 C1236.2 1279.2 1500.8 1018.8 1617.0 1018.8" stroke="#fff" stroke-opacity="0.5" stroke-width="7" fill="none"/>
<path d="M1120.0 1279.2 C1236.2 1279.2 1500.8 1080.8 1617.0 1080.8" stroke="#fff" stroke-opacity="0.5" stroke-width="7" fill="none"/>
<path d="M1120.0 1299.3 C1236.2 1299.3 1500.8 1143.8 1617.0 1143.8" stroke="#fff" stroke-opacity="0.5" stroke-width="7" fill="none"/>
<path d="M1120.0 1319.5 C1236.2 1319.5 1500.8 1205.0 1617.0 1205.0" stroke="#fff" stroke-opacity="0.5" stroke-width="7" fill="none"/>
<path d="M1120.0 1339.6 C1236.2 1339.6 1500.8 1267.0 1617.0 1267.0" stroke="#fff" stroke-opacity="0.5" stroke-width="7" fill="none"/>
<path d="M1120.0 1359.8 C1236.2 1359.8 1532.2 1361.0 1648.5 1361.0" stroke="#fff" stroke-opacity="0.5" stroke-width="7" fill="none"/>
<path d="M1120.0 1379.9 C1236.2 1379.9 1532.2 1423.0 1648.5 1423.0" stroke="#fff" stroke-opacity="0.5" stroke-width="7" fill="none"/>
<path d="M1120.0 1400.0 C1236.2 1400.0 1500.8 1516.8 1617.0 1516.8" stroke="#fff" stroke-opacity="0.5" stroke-width="7" fill="none"/>
<path d="M779.5 864.0 C895.8 864.0 693.8 646.5 810.0 646.5" stroke="#9c9c9c" stroke-width="3" fill="none"/>
<path d="M965.0 646.5 C1039.2 646.5 984.8 615.5 1059.0 615.5" stroke="#9c9c9c" stroke-width="3" fill="none"/>
<path d="M779.5 864.0 C895.8 864.0 1034.8 864.0 1151.0 864.0" stroke="#9c9c9c" stroke-width="3" fill="none"/>
<path d="M779.5 864.0 C895.8 864.0 848.8 1329.5 965.0 1329.5" stroke="#9c9c9c" stroke-width="3" fill="none"/>
<path d="M779.5 864.0 C895.8 864.0 953.8 1860.0 1070.0 1860.0" stroke="#9c9c9c" stroke-width="3" fill="none"/>
<path d="M1120.0 1259.0 C1236.2 1259.0 1500.8 894.8 1617.0 894.8" stroke="#9c9c9c" stroke-width="3" fill="none"/>
<path d="M1120.0 1259.0 C1236.2 1259.0 1500.8 956.8 1617.0 956.8" stroke="#9c9c9c" stroke-width="3" fill="none"/>
<path d="M1120.0 1279.2 C1236.2 1279.2 1500.8 1018.8 1617.0 1018.8" stroke="#9c9c9c" stroke-width="3" fill="none"/>
<path d="M1120.0 1279.2 C1236.2 1279.2 1500.8 1080.8 1617.0 1080.8" stroke="#9c9c9c" stroke-width="3" fill="none"/>
<path d="M1120.0 1299.3 C1236.2 1299.3 1500.8 1143.8 1617.0 1143.8" stroke="#9c9c9c" stroke-width="3" fill="none"/>
<path d="M1120.0 1319.5 C1236.2 1319.5 1500.8 1205.0 1617.0 1205.0" stroke="#9c9c9c" stroke-width="3" fill="none"/>
<path d="M1120.0 1339.6 C1236.2 1339.6 1500.8 1267.0 1617.0 1267.0" stroke="#9c9c9c" stroke-width="3" fill="none"/>
<path d="M1120.0 1359.8 C1236.2 1359.8 1532.2 1361.0 1648.5 1361.0" stroke="#9c9c9c" stroke-width="3" fill="none"/>
<path d="M1120.0 1379.9 C1236.2 1379.9 1532.2 1423.0 1648.5 1423.0" stroke="#9c9c9c" stroke-width="3" fill="none"/>
<path d="M1120.0 1400.0 C1236.2 1400.0 1500.8 1516.8 1617.0 1516.8" stroke="#9c9c9c" stroke-width="3" fill="none"/>
<rect x="810" y="623" width="155" height="47" rx="5.5" fill="#debd5c" stroke="#999" stroke-width="1.6" stroke-opacity="0.7"/>
<path d="M815.5 623 H856.5 V670 H815.5 A5.5 5.5 0 0 1 810 664.5 V628.5 A5.5 5.5 0 0 1 815.5 623 Z" fill="#000" fill-opacity="0.05"/>
<path d="M856.5 624 V669" stroke="#000" stroke-opacity="0.1" stroke-width="1.5"/>
<text x="869" y="654.1" font-family="Liberation Sans" font-size="21.6" fill="#444" text-anchor="start" >csv</text>
<g transform="translate(833.2 646.5)"><path d="M-11 -15 H5 L11 -9 V15 H-11 Z" fill="#fff"/><text x="0" y="4" font-family="Liberation Sans" font-size="12" fill="#d9b650" text-anchor="middle">1,2</text></g>
<rect x="802.2" y="638.8" width="15.5" height="15.5" rx="4.5" fill="#d9d9d9" stroke="#aaa" stroke-width="1.6"/>
<rect x="957.2" y="638.8" width="15.5" height="15.5" rx="4.5" fill="#d9d9d9" stroke="#aaa" stroke-width="1.6"/>
<rect x="1059" y="592" width="185" height="47" rx="5.5" fill="#deb887" stroke="#999" stroke-width="1.6" stroke-opacity="0.7"/>
<path d="M1064.5 592 H1105.5 V639 H1064.5 A5.5 5.5 0 0 1 1059 633.5 V597.5 A5.5 5.5 0 0 1 1064.5 592 Z" fill="#000" fill-opacity="0.05"/>
<path d="M1105.5 593 V638" stroke="#000" stroke-opacity="0.1" stroke-width="1.5"/>
<text x="1118" y="623.1" font-family="Liberation Sans" font-size="21.6" fill="#444" text-anchor="start" font-style="italic">file path</text>
<g transform="translate(1082.2 615.5)"><path d="M-11 -15 H5 L11 -9 V15 H-11 Z" fill="#fff"/><path d="M-13 3 H0 M-5 -3 L1 3 L-5 9" fill="none" stroke="#deb887" stroke-width="3"/></g>
<rect x="1051.2" y="607.8" width="15.5" height="15.5" rx="4.5" fill="#d9d9d9" stroke="#aaa" stroke-width="1.6"/>
<rect x="1236.2" y="607.8" width="15.5" height="15.5" rx="4.5" fill="#d9d9d9" stroke="#aaa" stroke-width="1.6"/>
<rect x="624.5" y="841" width="155" height="46" rx="5.5" fill="#deb887" stroke="#999" stroke-width="1.6" stroke-opacity="0.7"/>
<path d="M630.0 841 H671.0 V887 H630.0 A5.5 5.5 0 0 1 624.5 881.5 V846.5 A5.5 5.5 0 0 1 630.0 841 Z" fill="#000" fill-opacity="0.05"/>
<path d="M671.0 842 V886" stroke="#000" stroke-opacity="0.1" stroke-width="1.5"/>
<text x="683.5" y="871.6" font-family="Liberation Sans" font-size="21.6" fill="#444" text-anchor="start" font-style="italic">Puerto1</text>
<g transform="translate(647.8 864.0)"><path d="M-15 15 H-11 V-15 H0 V15 H7.5 V-15 H13.5" fill="none" stroke="#fff" stroke-width="4.2" stroke-opacity="0.9"/><path d="M-15 15 H-11 V-15 H0 V15 H7.5 V-15 H13.5" fill="none" stroke="#d3ab7f" stroke-width="1.2"/></g>
<rect x="771.8" y="856.2" width="15.5" height="15.5" rx="4.5" fill="#d9d9d9" stroke="#aaa" stroke-width="1.6"/>
<rect x="634.5" y="891" width="19.5" height="19" rx="4" fill="#5aa67f"/>
<text x="659.5" y="907" font-family="Liberation Sans" font-size="18.4" fill="#888">connected</text>
<rect x="1336" y="844" width="42" height="40.5" rx="7" fill="#eee" stroke="#999" stroke-width="1.5" stroke-opacity="0.6"/>
<rect x="1344" y="850" width="26.5" height="28.5" rx="5" fill="#87a980" stroke="#999" stroke-opacity="0.5" stroke-width="1"/>
<rect x="1151" y="841" width="185" height="46" rx="5.5" fill="#87a980" stroke="#999" stroke-width="1.6" stroke-opacity="0.7"/>
<path d="M1330.5 841 H1289.5 V887 H1330.5 A5.5 5.5 0 0 0 1336 881.5 V846.5 A5.5 5.5 0 0 0 1330.5 841 Z" fill="#000" fill-opacity="0.05"/>
<path d="M1289.5 842 V886" stroke="#000" stroke-opacity="0.1" stroke-width="1.5"/>
<text x="1277" y="871.6" font-family="Liberation Sans" font-size="21.6" fill="#444" text-anchor="end" font-style="italic">debug 2</text>
<g transform="translate(1312.8 864.0)"><rect x="-7" y="-13.0" width="14" height="2.4" fill="#fff"/><rect x="-7" y="-8.4" width="14" height="2.4" fill="#fff"/><rect x="-7" y="-3.8" width="14" height="2.4" fill="#fff"/><rect x="-7" y="0.8" width="14" height="2.4" fill="#fff"/><rect x="-7" y="5.4" width="14" height="2.4" fill="#fff"/><rect x="-7" y="10.0" width="14" height="2.4" fill="#fff"/></g>
<rect x="1143.2" y="856.2" width="15.5" height="15.5" rx="4.5" fill="#d9d9d9" stroke="#aaa" stroke-width="1.6"/>
<rect x="965" y="1237" width="155" height="185" rx="5.5" fill="#fdd0a2" stroke="#999" stroke-width="1.6" stroke-opacity="0.7"/>
<path d="M970.5 1237 H1011.5 V1422 H970.5 A5.5 5.5 0 0 1 965 1416.5 V1242.5 A5.5 5.5 0 0 1 970.5 1237 Z" fill="#000" fill-opacity="0.05"/>
<path d="M1011.5 1238 V1421" stroke="#000" stroke-opacity="0.1" stroke-width="1.5"/>
<text x="1024" y="1337.1" font-family="Liberation Sans" font-size="21.6" fill="#444" text-anchor="start" font-style="italic">Split1</text>
<g transform="translate(988.2 1329.5)"><path d="M12.5 -13 Q10 -17.5 5 -16 Q2 -15 1.5 -9 L0 13 Q-1 18 -7 15" fill="none" stroke="#fff" stroke-width="2.8"/><path d="M-7 -1 H9" stroke="#fff" stroke-width="2.6"/></g>
<rect x="957.2" y="1321.8" width="15.5" height="15.5" rx="4.5" fill="#d9d9d9" stroke="#aaa" stroke-width="1.6"/>
<rect x="1112.2" y="1251.2" width="15.5" height="15.5" rx="4.5" fill="#d9d9d9" stroke="#aaa" stroke-width="1.6"/>
<rect x="1112.2" y="1271.4" width="15.5" height="15.5" rx="4.5" fill="#d9d9d9" stroke="#aaa" stroke-width="1.6"/>
<rect x="1112.2" y="1291.5" width="15.5" height="15.5" rx="4.5" fill="#d9d9d9" stroke="#aaa" stroke-width="1.6"/>
<rect x="1112.2" y="1311.7" width="15.5" height="15.5" rx="4.5" fill="#d9d9d9" stroke="#aaa" stroke-width="1.6"/>
<rect x="1112.2" y="1331.8" width="15.5" height="15.5" rx="4.5" fill="#d9d9d9" stroke="#aaa" stroke-width="1.6"/>
<rect x="1112.2" y="1352.0" width="15.5" height="15.5" rx="4.5" fill="#d9d9d9" stroke="#aaa" stroke-width="1.6"/>
<rect x="1112.2" y="1372.1" width="15.5" height="15.5" rx="4.5" fill="#d9d9d9" stroke="#aaa" stroke-width="1.6"/>
<rect x="1112.2" y="1392.3" width="15.5" height="15.5" rx="4.5" fill="#d9d9d9" stroke="#aaa" stroke-width="1.6"/>
<rect x="1617" y="871.5" width="155" height="46.5" rx="5.5" fill="#77c6cc" stroke="#999" stroke-width="1.6" stroke-opacity="0.7"/>
<path d="M1766.5 871.5 H1725.5 V918.0 H1766.5 A5.5 5.5 0 0 0 1772 912.5 V877.0 A5.5 5.5 0 0 0 1766.5 871.5 Z" fill="#000" fill-opacity="0.05"/>
<path d="M1725.5 872.5 V917.0" stroke="#000" stroke-opacity="0.1" stroke-width="1.5"/>
<text x="1713" y="902.4" font-family="Liberation Sans" font-size="21.6" fill="#444" text-anchor="end" >Voltaje</text>
<g transform="translate(1748.8 894.8)"><path d="M-10 8 A13 13 0 1 1 10 8" fill="none" stroke="#fff" stroke-width="2.6"/><path d="M-1 8 L4 -1" stroke="#fff" stroke-width="2.4"/></g>
<rect x="1609.2" y="887.0" width="15.5" height="15.5" rx="4.5" fill="#d9d9d9" stroke="#aaa" stroke-width="1.6"/>
<rect x="1617" y="933.5" width="155" height="46.5" rx="5.5" fill="#77c6cc" stroke="#999" stroke-width="1.6" stroke-opacity="0.7"/>
<path d="M1766.5 933.5 H1725.5 V980.0 H1766.5 A5.5 5.5 0 0 0 1772 974.5 V939.0 A5.5 5.5 0 0 0 1766.5 933.5 Z" fill="#000" fill-opacity="0.05"/>
<path d="M1725.5 934.5 V979.0" stroke="#000" stroke-opacity="0.1" stroke-width="1.5"/>
<text x="1713" y="964.4" font-family="Liberation Sans" font-size="21.6" fill="#444" text-anchor="end" >Voltaje</text>
<g transform="translate(1748.8 956.8)"><path d="M-11 -13 V12 H13" fill="none" stroke="#fff" stroke-width="2.2"/><path d="M-8 6 L-2 -3 L2 2 L10 -8" fill="none" stroke="#fff" stroke-width="2.2"/></g>
<rect x="1609.2" y="949.0" width="15.5" height="15.5" rx="4.5" fill="#d9d9d9" stroke="#aaa" stroke-width="1.6"/>
<rect x="1764.2" y="949.0" width="15.5" height="15.5" rx="4.5" fill="#d9d9d9" stroke="#aaa" stroke-width="1.6"/>
<rect x="1617" y="995.5" width="186" height="46.5" rx="5.5" fill="#77c6cc" stroke="#999" stroke-width="1.6" stroke-opacity="0.7"/>
<path d="M1797.5 995.5 H1756.5 V1042.0 H1797.5 A5.5 5.5 0 0 0 1803 1036.5 V1001.0 A5.5 5.5 0 0 0 1797.5 995.5 Z" fill="#000" fill-opacity="0.05"/>
<path d="M1756.5 996.5 V1041.0" stroke="#000" stroke-opacity="0.1" stroke-width="1.5"/>
<text x="1744" y="1026.3" font-family="Liberation Sans" font-size="21.6" fill="#444" text-anchor="end" >Corriente</text>
<g transform="translate(1779.8 1018.8)"><path d="M-10 8 A13 13 0 1 1 10 8" fill="none" stroke="#fff" stroke-width="2.6"/><path d="M-1 8 L4 -1" stroke="#fff" stroke-width="2.4"/></g>
<rect x="1609.2" y="1011.0" width="15.5" height="15.5" rx="4.5" fill="#d9d9d9" stroke="#aaa" stroke-width="1.6"/>
<rect x="1617" y="1057.5" width="186" height="46.5" rx="5.5" fill="#77c6cc" stroke="#999" stroke-width="1.6" stroke-opacity="0.7"/>
<path d="M1797.5 1057.5 H1756.5 V1104.0 H1797.5 A5.5 5.5 0 0 0 1803 1098.5 V1063.0 A5.5 5.5 0 0 0 1797.5 1057.5 Z" fill="#000" fill-opacity="0.05"/>
<path d="M1756.5 1058.5 V1103.0" stroke="#000" stroke-opacity="0.1" stroke-width="1.5"/>
<text x="1744" y="1088.3" font-family="Liberation Sans" font-size="21.6" fill="#444" text-anchor="end" >Corriente</text>
<g transform="translate(1779.8 1080.8)"><path d="M-11 -13 V12 H13" fill="none" stroke="#fff" stroke-width="2.2"/><path d="M-8 6 L-2 -3 L2 2 L10 -8" fill="none" stroke="#fff" stroke-width="2.2"/></g>
<rect x="1609.2" y="1073.0" width="15.5" height="15.5" rx="4.5" fill="#d9d9d9" stroke="#aaa" stroke-width="1.6"/>
<rect x="1795.2" y="1073.0" width="15.5" height="15.5" rx="4.5" fill="#d9d9d9" stroke="#aaa" stroke-width="1.6"/>
<rect x="1617" y="1120.5" width="217" height="46.5" rx="5.5" fill="#77c6cc" stroke="#999" stroke-width="1.6" stroke-opacity="0.7"/>
<path d="M1828.5 1120.5 H1787.5 V1167.0 H1828.5 A5.5 5.5 0 0 0 1834 1161.5 V1126.0 A5.5 5.5 0 0 0 1828.5 1120.5 Z" fill="#000" fill-opacity="0.05"/>
<path d="M1787.5 1121.5 V1166.0" stroke="#000" stroke-opacity="0.1" stroke-width="1.5"/>
<text x="1775" y="1151.3" font-family="Liberation Sans" font-size="21.6" fill="#444" text-anchor="end" font-style="italic">Temp_Cont</text>
<g transform="translate(1810.8 1143.8)"><path d="M-10 8 A13 13 0 1 1 10 8" fill="none" stroke="#fff" stroke-width="2.6"/><path d="M-1 8 L4 -1" stroke="#fff" stroke-width="2.4"/></g>
<rect x="1609.2" y="1136.0" width="15.5" height="15.5" rx="4.5" fill="#d9d9d9" stroke="#aaa" stroke-width="1.6"/>
<rect x="1617" y="1182" width="186" height="46.5" rx="5.5" fill="#77c6cc" stroke="#999" stroke-width="1.6" stroke-opacity="0.7"/>
<path d="M1797.5 1182 H1756.5 V1228.5 H1797.5 A5.5 5.5 0 0 0 1803 1223.0 V1187.5 A5.5 5.5 0 0 0 1797.5 1182 Z" fill="#000" fill-opacity="0.05"/>
<path d="M1756.5 1183 V1227.5" stroke="#000" stroke-opacity="0.1" stroke-width="1.5"/>
<text x="1744" y="1212.8" font-family="Liberation Sans" font-size="21.6" fill="#444" text-anchor="end" font-style="italic">Temp_Bat</text>
<g transform="translate(1779.8 1205.2)"><path d="M-10 8 A13 13 0 1 1 10 8" fill="none" stroke="#fff" stroke-width="2.6"/><path d="M-1 8 L4 -1" stroke="#fff" stroke-width="2.4"/></g>
<rect x="1609.2" y="1197.5" width="15.5" height="15.5" rx="4.5" fill="#d9d9d9" stroke="#aaa" stroke-width="1.6"/>
<rect x="1617" y="1244" width="186" height="46.5" rx="5.5" fill="#77c6cc" stroke="#999" stroke-width="1.6" stroke-opacity="0.7"/>
<path d="M1797.5 1244 H1756.5 V1290.5 H1797.5 A5.5 5.5 0 0 0 1803 1285.0 V1249.5 A5.5 5.5 0 0 0 1797.5 1244 Z" fill="#000" fill-opacity="0.05"/>
<path d="M1756.5 1245 V1289.5" stroke="#000" stroke-opacity="0.1" stroke-width="1.5"/>
<text x="1744" y="1274.8" font-family="Liberation Sans" font-size="21.6" fill="#444" text-anchor="end" font-style="italic">Velocidad</text>
<g transform="translate(1779.8 1267.2)"><path d="M-11 -13 V12 H13" fill="none" stroke="#fff" stroke-width="2.2"/><path d="M-8 6 L-2 -3 L2 2 L10 -8" fill="none" stroke="#fff" stroke-width="2.2"/></g>
<rect x="1609.2" y="1259.5" width="15.5" height="15.5" rx="4.5" fill="#d9d9d9" stroke="#aaa" stroke-width="1.6"/>
<rect x="1795.2" y="1259.5" width="15.5" height="15.5" rx="4.5" fill="#d9d9d9" stroke="#aaa" stroke-width="1.6"/>
<rect x="1648.5" y="1338" width="155" height="46.5" rx="5.5" fill="#77c6cc" stroke="#999" stroke-width="1.6" stroke-opacity="0.7"/>
<path d="M1798.0 1338 H1757.0 V1384.5 H1798.0 A5.5 5.5 0 0 0 1803.5 1379.0 V1343.5 A5.5 5.5 0 0 0 1798.0 1338 Z" fill="#000" fill-opacity="0.05"/>
<path d="M1757.0 1339 V1383.5" stroke="#000" stroke-opacity="0.1" stroke-width="1.5"/>
<text x="1744.5" y="1368.8" font-family="Liberation Sans" font-size="21.6" fill="#444" text-anchor="end" >Latitud</text>
<g transform="translate(1780.2 1361.2)"><text x="0" y="3" font-family="Liberation Sans" font-size="15" fill="#fff" text-anchor="middle" font-weight="bold">abc</text><rect x="-13" y="8" width="26" height="2.5" fill="#fff"/></g>
<rect x="1640.8" y="1353.5" width="15.5" height="15.5" rx="4.5" fill="#d9d9d9" stroke="#aaa" stroke-width="1.6"/>
<rect x="1648.5" y="1400" width="186" height="46.5" rx="5.5" fill="#77c6cc" stroke="#999" stroke-width="1.6" stroke-opacity="0.7"/>
<path d="M1829.0 1400 H1788.0 V1446.5 H1829.0 A5.5 5.5 0 0 0 1834.5 1441.0 V1405.5 A5.5 5.5 0 0 0 1829.0 1400 Z" fill="#000" fill-opacity="0.05"/>
<path d="M1788.0 1401 V1445.5" stroke="#000" stroke-opacity="0.1" stroke-width="1.5"/>
<text x="1775.5" y="1430.8" font-family="Liberation Sans" font-size="21.6" fill="#444" text-anchor="end" >Lontitud</text>
<g transform="translate(1811.2 1423.2)"><text x="0" y="3" font-family="Liberation Sans" font-size="15" fill="#fff" text-anchor="middle" font-weight="bold">abc</text><rect x="-13" y="8" width="26" height="2.5" fill="#fff"/></g>
<rect x="1640.8" y="1415.5" width="15.5" height="15.5" rx="4.5" fill="#d9d9d9" stroke="#aaa" stroke-width="1.6"/>
<rect x="1617" y="1493.5" width="155" height="46.5" rx="5.5" fill="#3fadb5" stroke="#999" stroke-width="1.6" stroke-opacity="0.7"/>
<path d="M1766.5 1493.5 H1725.5 V1540.0 H1766.5 A5.5 5.5 0 0 0 1772 1534.5 V1499.0 A5.5 5.5 0 0 0 1766.5 1493.5 Z" fill="#000" fill-opacity="0.05"/>
<path d="M1725.5 1494.5 V1539.0" stroke="#000" stroke-opacity="0.1" stroke-width="1.5"/>
<text x="1713" y="1524.3" font-family="Liberation Sans" font-size="21.6" fill="#444" text-anchor="end" >led</text>
<g transform="translate(1748.8 1516.8)"><path d="M-9 16 V4 A9 9 0 0 1 9 4 V16 Z" fill="#fff"/><path d="M0 -14 V-10 M-13 -8 L-10 -5 M13 -8 L10 -5" stroke="#fff" stroke-width="2" stroke-opacity="0.7"/></g>
<rect x="1609.2" y="1509.0" width="15.5" height="15.5" rx="4.5" fill="#d9d9d9" stroke="#aaa" stroke-width="1.6"/>
</svg>
<div class="a" style="left:2123px;top:522px;width:34px;height:999px;background:#f3f3f3;"></div>
<svg style="left:2130px;top:534px" width="20" height="12" viewBox="0 0 20 12"><path d="M1 11 H19 L10 1 Z" fill="#999"/></svg>
<div class="a" style="left:2128px;top:555px;width:24px;height:76px;background:#c1c1c1;"></div>
<svg style="left:2130px;top:1497px" width="20" height="12" viewBox="0 0 20 12"><path d="M1 1 H19 L10 11 Z" fill="#777"/></svg>
<div class="a" style="left:437px;top:1521px;width:1686px;height:34px;background:#f3f3f3;"></div>
<svg style="left:447px;top:1528px" width="12" height="20" viewBox="0 0 12 20"><path d="M11 1 V19 L1 10 Z" fill="#999"/></svg>
<div class="a" style="left:470px;top:1526px;width:221px;height:24px;background:#c1c1c1;"></div>
<svg style="left:2101px;top:1528px" width="12" height="20" viewBox="0 0 12 20"><path d="M1 1 V19 L11 10 Z" fill="#555"/></svg>
<div class="a" style="left:2123px;top:1521px;width:34px;height:34px;background:#dddddd;"></div>
<div class="a" style="left:2157px;top:443px;width:3px;height:1170px;background:#dddddd;"></div>
<div class="a" style="left:437px;top:1555px;width:1720px;height:58px;background:#f3f3f3;"></div>
<div class="a" style="left:437px;top:1554px;width:1720px;height:2px;background:#cccccc;"></div>
<div class="a" style="left:460px;top:1564px;width:42px;height:41px;background:#fff;border:2px solid #ddd"></div>
<svg style="left:468px;top:1571px" width="28" height="28" viewBox="0 0 28 28"><circle cx="11.5" cy="11.5" r="8" fill="none" stroke="#777" stroke-width="3"/><path d="M17 17 L24 24" stroke="#777" stroke-width="3.5"/></svg>
<div class="a" style="left:1957px;top:1563px;width:41px;height:42px;background:#fff;border:2px solid #ccc"></div>
<svg style="left:1960px;top:1569px" width="36" height="30" viewBox="0 0 36 30"><path d="M2.5 5 L12 3 L23 5 L33 3 V26 L23 28 L12 26 L2.5 28 Z M12 3 V26 M23 5 V28" fill="none" stroke="#8a8a8a" stroke-width="2.2"/></svg>
<div class="a" style="left:2008px;top:1563px;width:126px;height:42px;background:#fff;border:2px solid #ccc"></div>
<div class="a" style="left:2048px;top:1563px;width:2px;height:42px;background:#ccc;"></div>
<div class="a" style="left:2090px;top:1563px;width:2px;height:42px;background:#ccc;"></div>
<svg style="left:2008px;top:1564px" width="126" height="41" viewBox="0 0 126 41"><path d="M10 20 H32" stroke="#777" stroke-width="4.5"/><circle cx="61.5" cy="20.5" r="9.5" fill="none" stroke="#7a7a7a" stroke-width="3.2"/><path d="M92.5 20.5 H114.5 M103.5 9.5 V31.5" stroke="#777" stroke-width="4.5"/></svg>
<div class="a" style="left:2160px;top:443px;width:15px;height:1170px;background:#f3f3f3;"></div>
<div class="a" style="left:2175px;top:443px;width:2px;height:1170px;background:#bbbbbb;"></div>
<div class="a" style="left:2177px;top:443px;width:690px;height:79px;background:#ffffff;"></div>
<div class="a" style="left:2177px;top:520px;width:690px;height:2px;background:#dddddd;"></div>
<div class="a" style="left:2184px;top:451px;width:294px;height:71px;background:#fff;border:2px solid #bbb;border-bottom:none"></div>
<svg style="left:2211px;top:467px" width="30" height="32" viewBox="0 0 30 32"><path d="M9 5 Q15 0 21 5 Z" fill="#777"/><rect x="7" y="7" width="16" height="21" rx="3" fill="#777"/><rect x="14" y="7" width="2" height="21" fill="#fff" fill-opacity="0.6"/><path d="M1 16 H29 M3 6 L8 10 M27 6 L22 10 M3 28 L8 24 M27 28 L22 24" stroke="#777" stroke-width="2.5"/></svg>
<div class="t" style="left:2253.5px;top:469.2px;font-size:30.5px;color:#555;font-weight:bold;font-style:normal;font-family:'Liberation Sans',sans-serif;">debug</div>
<div class="a" style="left:2501px;top:454px;width:62px;height:62px;background:#ffffff;border:2px solid #ccc"></div>
<div class="a" style="left:2576px;top:454px;width:62px;height:62px;background:#ffffff;border:2px solid #ccc"></div>
<div class="a" style="left:2651px;top:454px;width:62px;height:62px;background:#eeeeee;border:2px solid #ccc"></div>
<div class="a" style="left:2727px;top:454px;width:62px;height:62px;background:#ffffff;border:2px solid #ccc"></div>
<div class="a" style="left:2653px;top:511px;width:58px;height:3px;background:#999;"></div>
<svg style="left:2501px;top:454px" width="62" height="62" viewBox="0 0 62 62"><rect x="27" y="16.5" width="6.5" height="6" fill="#888"/><path d="M24 26 H33.5 V37.5 H37 V42 H24.5 V37.5 H27.5 V30 H24 Z" fill="#888"/></svg>
<svg style="left:2576px;top:454px" width="62" height="62" viewBox="0 0 62 62"><path d="M22 17 H44 L39 40 H17 Z" fill="#7a7a7a"/><path d="M17 40 H39 L38.5 43.5 H16.5 Z" fill="#fff" stroke="#7a7a7a" stroke-width="1.5"/><path d="M25 21 H40 M24 25 H39" stroke="#cfcfcf" stroke-width="2"/></svg>
<svg style="left:2667px;top:470px" width="30" height="32" viewBox="0 0 30 32"><path d="M9 5 Q15 0 21 5 Z" fill="#777"/><rect x="7" y="7" width="16" height="21" rx="3" fill="#777"/><rect x="14" y="7" width="2" height="21" fill="#fff" fill-opacity="0.6"/><path d="M1 16 H29 M3 6 L8 10 M27 6 L22 10 M3 28 L8 24 M27 28 L22 24" stroke="#777" stroke-width="2.5"/></svg>
<svg style="left:2727px;top:454px" width="62" height="62" viewBox="0 0 62 62"><g transform="translate(30.5 29.5)"><circle r="8.5" fill="none" stroke="#888" stroke-width="6"/><rect x="-3" y="-14" width="6" height="6" fill="#888" transform="rotate(0)"/><rect x="-3" y="-14" width="6" height="6" fill="#888" transform="rotate(45)"/><rect x="-3" y="-14" width="6" height="6" fill="#888" transform="rotate(90)"/><rect x="-3" y="-14" width="6" height="6" fill="#888" transform="rotate(135)"/><rect x="-3" y="-14" width="6" height="6" fill="#888" transform="rotate(180)"/><rect x="-3" y="-14" width="6" height="6" fill="#888" transform="rotate(225)"/><rect x="-3" y="-14" width="6" height="6" fill="#888" transform="rotate(270)"/><rect x="-3" y="-14" width="6" height="6" fill="#888" transform="rotate(315)"/></g></svg>
<svg style="left:2822px;top:480px" width="20" height="12" viewBox="0 0 20 12"><path d="M1 1 H19 L10 11 Z" fill="#777"/></svg>
<div class="a" style="left:2177px;top:522px;width:690px;height:91px;background:#f3f3f3;"></div>
<div class="a" style="left:2177px;top:613px;width:690px;height:2px;background:#dddddd;"></div>
<div class="a" style="left:2424px;top:540px;width:247px;height:56px;background:#fff;border:2px solid #ccc"></div>
<svg style="left:2441px;top:556px" width="26" height="26" viewBox="0 0 26 26"><path d="M1 2 H24 L15 12 V25 L10 21 V12 Z" fill="#777"/></svg>
<div class="t" style="left:2474.0px;top:553.3px;font-size:28.6px;color:#888;font-weight:normal;font-style:normal;font-family:'Liberation Sans',sans-serif;">current flow</div>
<svg style="left:2640px;top:563px" width="18" height="10" viewBox="0 0 18 10"><path d="M1 1 H17 L9 9 Z" fill="#777"/></svg>
<div class="a" style="left:2693px;top:540px;width:133px;height:56px;background:#fff;border:2px solid #ccc"></div>
<svg style="left:2712px;top:553px" width="26" height="30" viewBox="0 0 26 30"><rect x="3" y="5" width="20" height="3" fill="#777"/><rect x="9" y="1" width="8" height="5" fill="none" stroke="#777" stroke-width="2"/><rect x="5" y="9" width="16" height="20" rx="2" fill="#777"/></svg>
<div class="t" style="left:2745.0px;top:553.3px;font-size:28.6px;color:#888;font-weight:normal;font-style:normal;font-family:'Liberation Sans',sans-serif;">all</div>
<svg style="left:2796px;top:563px" width="18" height="10" viewBox="0 0 18 10"><path d="M1 1 H17 L9 9 Z" fill="#777"/></svg>
<div class="a" style="left:2177px;top:615px;width:690px;height:940px;overflow:hidden;background:#f3f3f3">
<div class="a" style="left:17px;top:2px;width:626px;height:938px;background:#fff"></div>
<div class="a" style="left:643px;top:3px;width:18px;height:937px;background:#eeeeee"></div><div class="a" style="left:661px;top:3px;width:29px;height:937px;background:#f3f3f3"></div>
<div class="a" style="left:665px;top:35px;width:25px;height:68px;background:#c1c1c1"></div>
<svg style="left:668px;top:15px" width="18" height="10" viewBox="0 0 18 10"><path d="M1 9 H17 L9 1 Z" fill="#999"/></svg>
<svg style="left:668px;top:917px" width="18" height="10" viewBox="0 0 18 10"><path d="M1 1 H17 L9 9 Z" fill="#555"/></svg>
<div class="t" style="left:22.0px;top:16.8px;font-size:24.4px;color:#999;font-weight:normal;font-style:normal;font-family:'Liberation Sans',sans-serif;">20/1/2025, 8:06:10 p. m.</div><div class="t" style="left:308.5px;top:16.8px;font-size:24.4px;color:#999;font-weight:normal;font-style:normal;font-family:'Liberation Sans',sans-serif;">node: debug 3</div>
<div class="t" style="left:22.0px;top:60.3px;font-size:24.4px;color:#c09d9d;font-weight:normal;font-style:normal;font-family:'Liberation Sans',sans-serif;">msg.payload : Object</div>
<svg style="left:39px;top:117.5px" width="12" height="16" viewBox="0 0 12 16"><path d="M1 1 V15 L11 8 Z" fill="#777"/></svg>
<div class="t" style="left:62px;top:114.3px;font-size:28.9px;font-family:'Liberation Mono',monospace;color:#555;line-height:1;-webkit-text-stroke:0.5px currentColor">{ <span style="color:#7a2d92">lat</span>: <span style="color:#1f3ed8">4.9413231</span>, <span style="color:#7a2d92">lon</span>:</div>
<div class="t" style="left:33px;top:152.9px;font-size:28.9px;font-family:'Liberation Mono',monospace;color:#555;line-height:1;-webkit-text-stroke:0.5px currentColor"><span style="color:#1f3ed8">-74.01150133</span>, <span style="color:#7a2d92">name</span>: <span style="color:#c02a2a">"Furtivo_II"</span>,</div>
<div class="t" style="left:33px;top:190.3px;font-size:28.9px;font-family:'Liberation Mono',monospace;color:#555;line-height:1;-webkit-text-stroke:0.5px currentColor"><span style="color:#7a2d92">icon</span>: <span style="color:#c02a2a">"car"</span>, <span style="color:#7a2d92">color</span>: <span style="color:#c02a2a">"#000"</span> }</div>
<div class="a" style="left:17px;top:236px;width:626px;height:2px;background:#eee"></div>
<div class="t" style="left:22.0px;top:251.6px;font-size:24.4px;color:#999;font-weight:normal;font-style:normal;font-family:'Liberation Sans',sans-serif;">20/1/2025, 8:06:11 p. m.</div><div class="t" style="left:308.5px;top:251.6px;font-size:24.4px;color:#999;font-weight:normal;font-style:normal;font-family:'Liberation Sans',sans-serif;">node: debug 2</div>
<div class="t" style="left:22.0px;top:296.0px;font-size:24.4px;color:#c09d9d;font-weight:normal;font-style:normal;font-family:'Liberation Sans',sans-serif;">msg.payload : string[106]</div>
<svg style="left:39px;top:353px" width="12" height="16" viewBox="0 0 12 16"><path d="M1 1 V15 L11 8 Z" fill="#777"/></svg>
<div class="t" style="left:33px;top:386.9px;font-size:28.9px;font-family:'Liberation Mono',monospace;color:#555;line-height:1;-webkit-text-stroke:0.5px currentColor"><span style="color:#c02a2a">"s,49.21314186590168,13.0696183538</span></div>
<div class="t" style="left:33px;top:423.4px;font-size:28.9px;font-family:'Liberation Mono',monospace;color:#555;line-height:1;-webkit-text-stroke:0.5px currentColor"><span style="color:#c02a2a">31595,53.9535286982832,49.07356425</span></div>
<div class="t" style="left:33px;top:459.9px;font-size:28.9px;font-family:'Liberation Mono',monospace;color:#555;line-height:1;-webkit-text-stroke:0.5px currentColor"><span style="color:#c02a2a">412267,31.4278,4.941465,-74.011439</span></div>
<div class="t" style="left:33px;top:496.9px;font-size:28.9px;font-family:'Liberation Mono',monospace;color:#555;line-height:1;-webkit-text-stroke:0.5px currentColor"><span style="color:#c02a2a">5&#8629;,f"</span></div>
<div class="a" style="left:17px;top:544px;width:626px;height:2px;background:#eee"></div>
<div class="t" style="left:22.0px;top:560.1px;font-size:24.4px;color:#999;font-weight:normal;font-style:normal;font-family:'Liberation Sans',sans-serif;">20/1/2025, 8:06:11 p. m.</div><div class="t" style="left:308.5px;top:560.1px;font-size:24.4px;color:#999;font-weight:normal;font-style:normal;font-family:'Liberation Sans',sans-serif;">node: debug 3</div>
<div class="t" style="left:22.0px;top:604.6px;font-size:24.4px;color:#c09d9d;font-weight:normal;font-style:normal;font-family:'Liberation Sans',sans-serif;">msg.payload : Object</div>
<svg style="left:39px;top:662px" width="12" height="16" viewBox="0 0 12 16"><path d="M1 1 V15 L11 8 Z" fill="#777"/></svg>
<div class="t" style="left:62px;top:658.3px;font-size:28.9px;font-family:'Liberation Mono',monospace;color:#555;line-height:1;-webkit-text-stroke:0.5px currentColor">{ <span style="color:#7a2d92">lat</span>: <span style="color:#1f3ed8">4.941465</span>, <span style="color:#7a2d92">lon</span>:</div>
<div class="t" style="left:33px;top:696.9px;font-size:28.9px;font-family:'Liberation Mono',monospace;color:#555;line-height:1;-webkit-text-stroke:0.5px currentColor"><span style="color:#1f3ed8">-74.0114395</span>, <span style="color:#7a2d92">name</span>: <span style="color:#c02a2a">"Furtivo_II"</span>,</div>
<div class="t" style="left:33px;top:734.2px;font-size:28.9px;font-family:'Liberation Mono',monospace;color:#555;line-height:1;-webkit-text-stroke:0.5px currentColor"><span style="color:#7a2d92">icon</span>: <span style="color:#c02a2a">"car"</span>, <span style="color:#7a2d92">color</span>: <span style="color:#c02a2a">"#000"</span> }</div>
<div class="a" style="left:17px;top:780px;width:626px;height:2px;background:#eee"></div>
<div class="t" style="left:22.0px;top:795.3px;font-size:24.4px;color:#999;font-weight:normal;font-style:normal;font-family:'Liberation Sans',sans-serif;">20/1/2025, 8:06:12 p. m.</div><div class="t" style="left:308.5px;top:795.3px;font-size:24.4px;color:#999;font-weight:normal;font-style:normal;font-family:'Liberation Sans',sans-serif;">node: debug 2</div>
<div class="t" style="left:22.0px;top:839.8px;font-size:24.4px;color:#c09d9d;font-weight:normal;font-style:normal;font-family:'Liberation Sans',sans-serif;">msg.payload : string[106]</div>
<svg style="left:39px;top:895.5px" width="12" height="16" viewBox="0 0 12 16"><path d="M1 1 V15 L11 8 Z" fill="#777"/></svg>
<div class="t" style="left:33px;top:931.9px;font-size:28.9px;font-family:'Liberation Mono',monospace;color:#555;line-height:1;-webkit-text-stroke:0.5px currentColor"><span style="color:#c02a2a">"s,50.20605404135107,0.17115806471</span></div>
</div>
<div class="a" style="left:2177px;top:1555px;width:690px;height:58px;background:#f3f3f3;"></div>
<div class="a" style="left:2177px;top:1554px;width:690px;height:2px;background:#cccccc;"></div>
<div class="a" style="left:2815px;top:1564px;width:43px;height:41px;background:#fff;border:2px solid #ddd"></div>
<svg style="left:2822px;top:1571px" width="30" height="28" viewBox="0 0 30 28"><rect x="2" y="2" width="26" height="16" fill="none" stroke="#888" stroke-width="3"/><rect x="2" y="15" width="26" height="4" fill="#888"/><rect x="11" y="19" width="8" height="5" fill="#888"/></svg>
</body></html>
